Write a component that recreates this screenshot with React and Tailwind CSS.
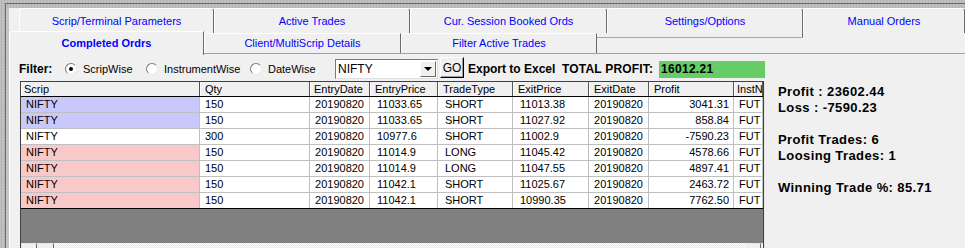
import React from 'react'

const texture =
  'bg-[repeating-conic-gradient(#b4b4b4_0%_25%,#c6c6c6_0%_50%)] bg-[length:3px_3px]'

const topTabs = [
  { label: 'Scrip/Terminal Parameters', w: 'w-[195px]' },
  { label: 'Active Trades', w: 'w-[196px]' },
  { label: 'Cur. Session Booked Ords', w: 'w-[197px]' },
  { label: 'Settings/Options', w: 'w-[196px]' },
  { label: 'Manual Orders', w: 'w-[162px]' },
]

const cols = [
  { name: 'Scrip', w: 'w-[179px]', head: 'pl-[2px]', cell: 'pl-[5px]' },
  { name: 'Qty', w: 'w-[110px]', head: 'pl-[4px]', cell: 'pl-[5px]' },
  { name: 'EntryDate', w: 'w-[60px]', head: 'pl-[3px]', cell: 'justify-end pr-[5px]' },
  { name: 'EntryPrice', w: 'w-[68px]', head: 'pl-[4px]', cell: 'pl-[7px]' },
  { name: 'TradeType', w: 'w-[75px]', head: 'pl-[4px]', cell: 'pl-[7px]' },
  { name: 'ExitPrice', w: 'w-[76px]', head: 'pl-[4px]', cell: 'pl-[7px]' },
  { name: 'ExitDate', w: 'w-[60px]', head: 'pl-[4px]', cell: 'justify-end pr-[5px]' },
  { name: 'Profit', w: 'w-[85px]', head: 'pl-[4px]', cell: 'justify-end pr-[4px]' },
  { name: 'InstN', w: 'w-[29px]', head: 'pl-[2px]', cell: 'pl-[5px]' },
]

const rows = [
  ['NIFTY', '150', '20190820', '11033.65', 'SHORT', '11013.38', '20190820', '3041.31', 'FUT', 'bg-[#c8c8fa]'],
  ['NIFTY', '150', '20190820', '11033.65', 'SHORT', '11027.92', '20190820', '858.84', 'FUT', 'bg-[#c8c8fa]'],
  ['NIFTY', '300', '20190820', '10977.6', 'SHORT', '11002.9', '20190820', '-7590.23', 'FUT', 'bg-white'],
  ['NIFTY', '150', '20190820', '11014.9', 'LONG', '11045.42', '20190820', '4578.66', 'FUT', 'bg-[#f9c8c8]'],
  ['NIFTY', '150', '20190820', '11014.9', 'LONG', '11047.55', '20190820', '4897.41', 'FUT', 'bg-[#f9c8c8]'],
  ['NIFTY', '150', '20190820', '11042.1', 'SHORT', '11025.67', '20190820', '2463.72', 'FUT', 'bg-[#f9c8c8]'],
  ['NIFTY', '150', '20190820', '11042.1', 'SHORT', '10990.35', '20190820', '7762.50', 'FUT', 'bg-[#f9c8c8]'],
]

function Radio({ checked, label, w }) {
  return (
    <div className={`flex items-center ${w}`}>
      <span className="w-[12px] h-[12px] rounded-full bg-white border border-t-[#7a7a7a] border-l-[#7a7a7a] border-b-[#e8e8e8] border-r-[#e8e8e8] flex items-center justify-center">
        {checked && <span className="w-[4px] h-[4px] rounded-full bg-black" />}
      </span>
      <span className="ml-[6px] text-[11px] text-black">{label}</span>
    </div>
  )
}

export default function App() {
  return (
    <div className={`w-[965px] h-[248px] overflow-hidden pl-[5px] pt-[3px] font-['Liberation_Sans',Arial,sans-serif] ${texture}`}>
      <div className={`h-full border-l border-t border-[#6a6a6a] flex flex-col ${texture}`}>
        <div className="h-[4px] shrink-0" />
        <div className="flex flex-1 min-h-0">
          <div className="w-[3px] bg-[#c4c4c4]" />
          <div className="w-[956px] flex flex-col bg-[#f0f0f0]">
            {/* tab row 1 */}
            <div className="flex h-[25px] shrink-0 pl-[10px]">
              {topTabs.map((t) => (
                <div
                  key={t.label}
                  className={`${t.w} h-[25px] flex items-center justify-center border-t border-l border-white border-r border-r-[#6a6a6a] rounded-t-[3px] text-[11px] text-[#0000ff]`}
                >
                  {t.label}
                </div>
              ))}
            </div>
            {/* tab row 2 */}
            <div className="flex h-[20px] shrink-0 items-start">
              <div className="relative z-10 w-[195px] h-[24px] -mt-[2px] -mb-[2px] bg-[#f0f0f0] flex items-center justify-center border-t border-l border-white border-r border-r-[#6a6a6a] rounded-tl-[3px] text-[11px] font-bold text-[#0000ff]">
                Completed Ordrs
              </div>
              <div className="w-[197px] h-[20px] flex items-center justify-center border-t border-l border-white border-r border-r-[#6a6a6a] rounded-tl-[3px] text-[11px] text-[#0000ff]">
                Client/MultiScrip Details
              </div>
              <div className="w-[196px] h-[20px] flex items-center justify-center border-t border-l border-white border-r border-r-[#6a6a6a] rounded-tl-[3px] text-[11px] text-[#0000ff]">
                Filter Active Trades
              </div>
              <div className="w-[206px] h-[4px] border-r border-[#6a6a6a]" />
              <div className="w-[206px] -ml-[206px] mt-[4px] border-t border-[#a8a8a8]" />
            </div>
            {/* panel */}
            <div className="flex-1 min-h-0 border-t border-[#a0a0a0] border-l border-l-white flex flex-col">
              <div className="h-[27px] shrink-0 pt-[3px] pl-[9px] flex items-center">
                <span className="w-[46px] text-[12px] font-bold text-black">Filter:</span>
                <Radio checked label="ScripWise" w="w-[81px]" />
                <Radio label="InstrumentWise" w="w-[104px]" />
                <Radio label="DateWise" w="w-[85px]" />
                <div className="w-[103px] h-[20px] bg-white border border-t-[#7a7a7a] border-l-[#7a7a7a] border-b-[#e0e0e0] border-r-[#e0e0e0] flex items-center">
                  <span className="flex-1 pl-[2px] text-[12px] text-black">NIFTY</span>
                  <span className="w-[16px] h-[16px] mr-px bg-[#f0f0f0] border border-t-white border-l-white border-b-[#6a6a6a] border-r-[#6a6a6a] flex items-center justify-center">
                    <span className="w-0 h-0 border-l-[4px] border-r-[4px] border-t-[4px] border-l-transparent border-r-transparent border-t-black" />
                  </span>
                </div>
                <div className="ml-[2px] -mt-[3px] w-[24px] h-[21px] bg-[#f0f0f0] border border-t-white border-l-white border-b-black border-r-black shadow-[inset_-1px_-1px_0_#a0a0a0] flex items-center justify-center text-[12px] text-black">
                  GO
                </div>
                <span className="ml-[4px] w-[94px] text-[12px] font-bold text-black">Export to Excel</span>
                <span className="w-[97px] text-[12px] font-bold text-black tracking-[0.2px]">TOTAL PROFIT:</span>
                <div className="w-[106px] h-[17px] bg-[#66cc66] flex items-center pl-[2px] text-[12px] font-bold text-black tracking-[0.3px]">
                  16012.21
                </div>
              </div>

              <div className="flex flex-1 min-h-0">
                {/* grid */}
                <div className="ml-[10px] w-[744px] flex flex-col border-l border-t border-r border-[#404040] bg-[#808080]">
                  <div className="flex h-[15px] shrink-0 border-b border-black bg-[#f0f0f0]">
                    {cols.map((c) => (
                      <div
                        key={c.name}
                        className={`${c.w} ${c.head} h-full shrink-0 overflow-hidden whitespace-nowrap border-r border-[#555] border-l border-l-white flex items-center text-[11px] text-black`}
                      >
                        {c.name}
                      </div>
                    ))}
                  </div>
                  {rows.map((r, i) => (
                    <div
                      key={i}
                      className={`flex h-[16px] shrink-0 border-b ${i === rows.length - 1 ? 'border-black' : 'border-[#c0c0c0]'}`}
                    >
                      {cols.map((c, j) => (
                        <div
                          key={c.name}
                          className={`${c.w} ${c.cell} ${j === 0 ? r[9] : 'bg-white'} h-full shrink-0 overflow-hidden whitespace-nowrap border-r border-[#c0c0c0] flex items-center text-[11px] text-black`}
                        >
                          {r[j]}
                        </div>
                      ))}
                    </div>
                  ))}
                  <div className="h-[34px] shrink-0 bg-[#808080]" />
                  <div className="h-[17px] shrink-0 flex bg-[repeating-conic-gradient(#ffffff_0%_25%,#e6e6e6_0%_50%)] bg-[length:2px_2px]">
                    <div className="w-[16px] bg-[#f0f0f0] border border-t-[#e8e8e8] border-l-[#e8e8e8] border-b-[#6a6a6a] border-r-[#6a6a6a]" />
                    <div className="w-[16px] ml-[1px] bg-[#f0f0f0] border border-t-[#e8e8e8] border-l-[#e8e8e8] border-b-[#6a6a6a] border-r-[#6a6a6a]" />
                    <div className="flex-1" />
                    <div className="w-[14px] mr-[2px] bg-[#f0f0f0] border border-t-[#e8e8e8] border-l-[#e8e8e8] border-b-[#6a6a6a] border-r-[#6a6a6a]" />
                  </div>
                </div>

                {/* summary */}
                <div className="pl-[13px] pt-[3px] text-[13px] font-bold text-black tracking-[0.4px] leading-[16px] border-l border-[#e8e8e8]">
                  <div>Profit : 23602.44</div>
                  <div>Loss : -7590.23</div>
                  <div className="h-[16px]" />
                  <div>Profit Trades: 6</div>
                  <div>Loosing Trades: 1</div>
                  <div className="h-[16px]" />
                  <div>Winning Trade %: 85.71</div>
                </div>
              </div>
            </div>
          </div>
        </div>
      </div>
    </div>
  )
}
